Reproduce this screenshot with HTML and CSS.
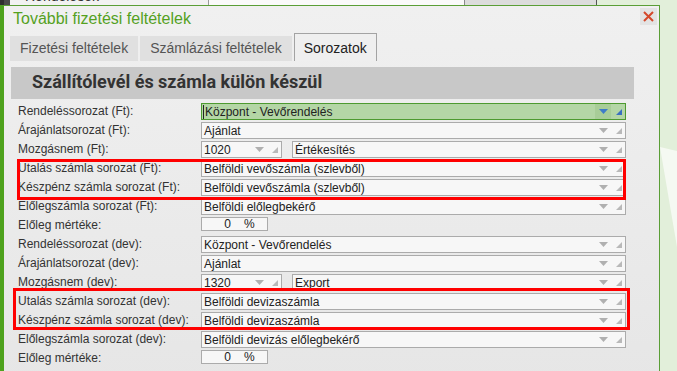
FILE: index.html
```html
<!DOCTYPE html>
<html lang="hu">
<head>
    <meta charset="UTF-8">
    <title>További fizetési feltételek</title>
    <link rel="stylesheet" href="styles.css">
</head>
<body>
    <!-- háttér: a mögöttes ablak csíkja -->
    <div class="topbar">
        <div class="tb-dark"></div>
        <div class="tb-dark2"></div>
        <div class="tb-list"><span>Rendelések</span></div>
        <div class="tb-white"></div>
        <div class="tb-gray"></div>
    </div>
    <div class="bg-ray"></div>

    <div class="dialog">
        <div class="titlebar">
            <span class="title">További fizetési feltételek</span>
            <div class="close">
                <svg width="11" height="11" viewBox="0 0 11 11"><path d="M1 1L10 10M10 1L1 10"/></svg>
            </div>
        </div>

        <!-- fülek -->
        <div class="tabs">
            <div class="tab">Fizetési feltételek</div>
            <div class="tab">Számlázási feltételek</div>
            <div class="tab tab-active">Sorozatok</div>
        </div>

        <div class="section-head">Szállítólevél és számla külön készül</div>

        <div class="form">
            <div class="row">
                <label class="lbl">Rendeléssorozat (Ft):</label>
                <div class="combo combo-active">
                    <span class="val"><span class="caret"></span>Központ - Vevőrendelés</span>
                    <span class="drop"><svg width="9" height="5" viewBox="0 0 9 5"><path d="M0 0H9L4.5 5Z"/></svg></span>
                    <span class="grip"><svg width="6" height="6" viewBox="0 0 6 6"><path d="M6 0V6H0Z"/></svg></span>
                </div>
            </div>
            <div class="row">
                <label class="lbl">Árajánlatsorozat (Ft):</label>
                <div class="combo">
                    <span class="val">Ajánlat</span>
                    <span class="drop"><svg width="9" height="5" viewBox="0 0 9 5"><path d="M0 0H9L4.5 5Z"/></svg></span>
                    <span class="grip"><svg width="6" height="6" viewBox="0 0 6 6"><path d="M6 0V6H0Z"/></svg></span>
                </div>
            </div>
            <div class="row">
                <label class="lbl">Mozgásnem (Ft):</label>
                <div class="pair">
                    <div class="combo combo-code">
                        <span class="val">1020</span>
                        <span class="drop"><svg width="9" height="5" viewBox="0 0 9 5"><path d="M0 0H9L4.5 5Z"/></svg></span>
                        <span class="grip"><svg width="6" height="6" viewBox="0 0 6 6"><path d="M6 0V6H0Z"/></svg></span>
                    </div>
                    <div class="combo">
                        <span class="val">Értékesítés</span>
                        <span class="drop"><svg width="9" height="5" viewBox="0 0 9 5"><path d="M0 0H9L4.5 5Z"/></svg></span>
                        <span class="grip"><svg width="6" height="6" viewBox="0 0 6 6"><path d="M6 0V6H0Z"/></svg></span>
                    </div>
                </div>
            </div>
            <div class="mark mark-ft">
                <div class="row">
                    <label class="lbl">Utalás számla sorozat (Ft):</label>
                    <div class="combo">
                        <span class="val">Belföldi vevőszámla (szlevből)</span>
                        <span class="drop"><svg width="9" height="5" viewBox="0 0 9 5"><path d="M0 0H9L4.5 5Z"/></svg></span>
                        <span class="grip"><svg width="6" height="6" viewBox="0 0 6 6"><path d="M6 0V6H0Z"/></svg></span>
                    </div>
                </div>
                <div class="row">
                    <label class="lbl">Készpénz számla sorozat (Ft):</label>
                    <div class="combo">
                        <span class="val">Belföldi vevőszámla (szlevből)</span>
                        <span class="drop"><svg width="9" height="5" viewBox="0 0 9 5"><path d="M0 0H9L4.5 5Z"/></svg></span>
                        <span class="grip"><svg width="6" height="6" viewBox="0 0 6 6"><path d="M6 0V6H0Z"/></svg></span>
                    </div>
                </div>
            </div>
            <div class="row">
                <label class="lbl">Előlegszámla sorozat (Ft):</label>
                <div class="combo">
                    <span class="val">Belföldi előlegbekérő</span>
                    <span class="drop"><svg width="9" height="5" viewBox="0 0 9 5"><path d="M0 0H9L4.5 5Z"/></svg></span>
                    <span class="grip"><svg width="6" height="6" viewBox="0 0 6 6"><path d="M6 0V6H0Z"/></svg></span>
                </div>
            </div>
            <div class="row">
                <label class="lbl">Előleg mértéke:</label>
                <div class="pct"><span class="pct-val">0</span><span class="pct-unit">%</span></div>
            </div>

            <div class="row">
                <label class="lbl">Rendeléssorozat (dev):</label>
                <div class="combo">
                    <span class="val">Központ - Vevőrendelés</span>
                    <span class="drop"><svg width="9" height="5" viewBox="0 0 9 5"><path d="M0 0H9L4.5 5Z"/></svg></span>
                    <span class="grip"><svg width="6" height="6" viewBox="0 0 6 6"><path d="M6 0V6H0Z"/></svg></span>
                </div>
            </div>
            <div class="row">
                <label class="lbl">Árajánlatsorozat (dev):</label>
                <div class="combo">
                    <span class="val">Ajánlat</span>
                    <span class="drop"><svg width="9" height="5" viewBox="0 0 9 5"><path d="M0 0H9L4.5 5Z"/></svg></span>
                    <span class="grip"><svg width="6" height="6" viewBox="0 0 6 6"><path d="M6 0V6H0Z"/></svg></span>
                </div>
            </div>
            <div class="row">
                <label class="lbl">Mozgásnem (dev):</label>
                <div class="pair">
                    <div class="combo combo-code">
                        <span class="val">1320</span>
                        <span class="drop"><svg width="9" height="5" viewBox="0 0 9 5"><path d="M0 0H9L4.5 5Z"/></svg></span>
                        <span class="grip"><svg width="6" height="6" viewBox="0 0 6 6"><path d="M6 0V6H0Z"/></svg></span>
                    </div>
                    <div class="combo">
                        <span class="val">Export</span>
                        <span class="drop"><svg width="9" height="5" viewBox="0 0 9 5"><path d="M0 0H9L4.5 5Z"/></svg></span>
                        <span class="grip"><svg width="6" height="6" viewBox="0 0 6 6"><path d="M6 0V6H0Z"/></svg></span>
                    </div>
                </div>
            </div>
            <div class="mark mark-dev">
                <div class="row">
                    <label class="lbl">Utalás számla sorozat (dev):</label>
                    <div class="combo">
                        <span class="val">Belföldi devizaszámla</span>
                        <span class="drop"><svg width="9" height="5" viewBox="0 0 9 5"><path d="M0 0H9L4.5 5Z"/></svg></span>
                        <span class="grip"><svg width="6" height="6" viewBox="0 0 6 6"><path d="M6 0V6H0Z"/></svg></span>
                    </div>
                </div>
                <div class="row">
                    <label class="lbl">Készpénz számla sorozat (dev):</label>
                    <div class="combo">
                        <span class="val">Belföldi devizaszámla</span>
                        <span class="drop"><svg width="9" height="5" viewBox="0 0 9 5"><path d="M0 0H9L4.5 5Z"/></svg></span>
                        <span class="grip"><svg width="6" height="6" viewBox="0 0 6 6"><path d="M6 0V6H0Z"/></svg></span>
                    </div>
                </div>
            </div>
            <div class="row">
                <label class="lbl">Előlegszámla sorozat (dev):</label>
                <div class="combo">
                    <span class="val">Belföldi devizás előlegbekérő</span>
                    <span class="drop"><svg width="9" height="5" viewBox="0 0 9 5"><path d="M0 0H9L4.5 5Z"/></svg></span>
                    <span class="grip"><svg width="6" height="6" viewBox="0 0 6 6"><path d="M6 0V6H0Z"/></svg></span>
                </div>
            </div>
            <div class="row">
                <label class="lbl">Előleg mértéke:</label>
                <div class="pct"><span class="pct-val">0</span><span class="pct-unit">%</span></div>
            </div>
        </div>
    </div>
</body>
</html>
```

FILE: styles.css
```css
/* általános */
:root {
    --green: #4f9e24;
    --green-bg: #e2efda;
    --field-border: #ababab;
    --field-bg: #f7f7f7;
    --mark: #ff0000;
}

* {
    box-sizing: border-box;
    margin: 0;
    padding: 0;
}

body {
    width: 677px;
    height: 371px;
    overflow: hidden;
    position: relative;
    background: var(--green-bg);
    font-family: 'Liberation Sans', Arial, sans-serif;
    font-size: 12px;
    color: #222;
}

/* mögöttes ablak csíkja */
.topbar {
    display: flex;
    height: 5px;
    overflow: hidden;
}

.tb-dark { width: 4px; background: #2f2f2f; }
.tb-dark2 { width: 6px; background: #4a4a4a; }

.tb-list {
    width: 199px;
    background: #f2f2f2;
    border-right: 1px solid #9a9a9a;
    padding-left: 15px;
}

.tb-list span {
    display: block;
    font-size: 14px;
    line-height: 14px;
    margin-top: -11px;
    color: #333;
}

.tb-white {
    width: 256px;
    background: #fafafa;
    border-right: 1px solid #8a8a8a;
}

.tb-gray {
    width: 132px;
    background: #dcdcdc;
    border-right: 1px solid #555;
}

.bg-ray {
    position: absolute;
    left: 660px;
    top: 147px;
    width: 17px;
    height: 100px;
    background: #f5f9f2;
    clip-path: polygon(0 0, 100% 4%, 100% 100%);
}

/* ablak */
.dialog {
    width: 660px;
    height: 380px;
    border: 1px solid #5a9e36;
    border-left: 4px solid #4ea21d;
    border-bottom: none;
    background: linear-gradient(#f0f0f0, #e6e6e6);
}

.titlebar {
    display: flex;
    justify-content: space-between;
    height: 27px;
    padding-left: 9px;
}

.title {
    font-size: 16px;
    line-height: 26px;
    color: #55a11f;
}

.close {
    width: 17px;
    height: 17px;
    margin: 2px 2px 0 0;
    background: #e3e3e3;
    display: flex;
    align-items: center;
    justify-content: center;
}

.close svg {
    stroke: #d4482b;
    stroke-width: 2;
}

/* fülek */
.tabs {
    display: flex;
    align-items: flex-end;
    gap: 2px;
    height: 28px;
    margin-left: 6px;
}

.tab {
    height: 25px;
    line-height: 25px;
    padding: 0 10px;
    font-size: 14px;
    color: #555;
    background: #e0e0e0;
}

.tab-active {
    height: 28px;
    padding: 2px 9px 0;
    color: #222;
    background: #efefef;
    border: 1px solid #a3a3a3;
    border-bottom: none;
}

.section-head {
    width: 623px;
    height: 32px;
    margin: 6px 0 0 7px;
    padding-left: 21px;
    background: #c8c8c8;
    font-family: Roboto, 'Liberation Sans', sans-serif;
    font-weight: bold;
    font-size: 18px;
    line-height: 29px;
    color: #333;
}

/* űrlap sorok */
.form {
    margin-top: 4px;
    padding-left: 14px;
}

.row {
    display: flex;
    height: 19px;
}

.lbl {
    width: 183px;
    line-height: 17px;
    color: #333;
}

.combo {
    width: 425px;
    height: 17px;
    display: flex;
    align-items: center;
    border: 1px solid var(--field-border);
    background: var(--field-bg);
}

.val {
    flex: 1;
    padding-left: 2px;
    white-space: nowrap;
    overflow: hidden;
    display: flex;
    align-items: center;
}

.drop {
    width: 16px;
    height: 100%;
    display: flex;
    align-items: center;
    justify-content: center;
    fill: #b0b0b0;
}

.grip {
    width: 14px;
    display: flex;
    justify-content: flex-end;
    padding: 1px 3px 0 0;
    fill: #b9b9b9;
}

.combo-active {
    border-color: #4d9a30;
    background: #b4d6a6;
}

.combo-active .drop {
    background: #a8cd98;
    fill: #3d7cc9;
}

.combo-active .grip {
    fill: #3a70c0;
}

.caret {
    width: 1px;
    height: 14px;
    background: #222;
    margin: 0 1px 0 -1px;
}

.pair {
    display: flex;
    gap: 10px;
    width: 425px;
}

.pair .combo {
    flex: 1;
    width: auto;
}

.pair .combo-code {
    flex: 0 0 81px;
}

.pct {
    width: 67px;
    height: 14px;
    display: flex;
    align-items: center;
    border: 1px solid var(--field-border);
    background: var(--field-bg);
    line-height: 12px;
}

.pct-val {
    width: 29px;
    text-align: right;
}

.pct-unit {
    margin-left: 13px;
}

/* piros kiemelések */
.mark {
    position: relative;
    width: 608px;
}

.mark::after {
    content: "";
    position: absolute;
    border: 3px solid var(--mark);
    pointer-events: none;
}

.mark-ft::after {
    left: -1px;
    top: -1px;
    right: 0;
    bottom: -2px;
}

.mark-dev::after {
    left: -5px;
    top: -5px;
    right: -4px;
    bottom: 1px;
}
```
